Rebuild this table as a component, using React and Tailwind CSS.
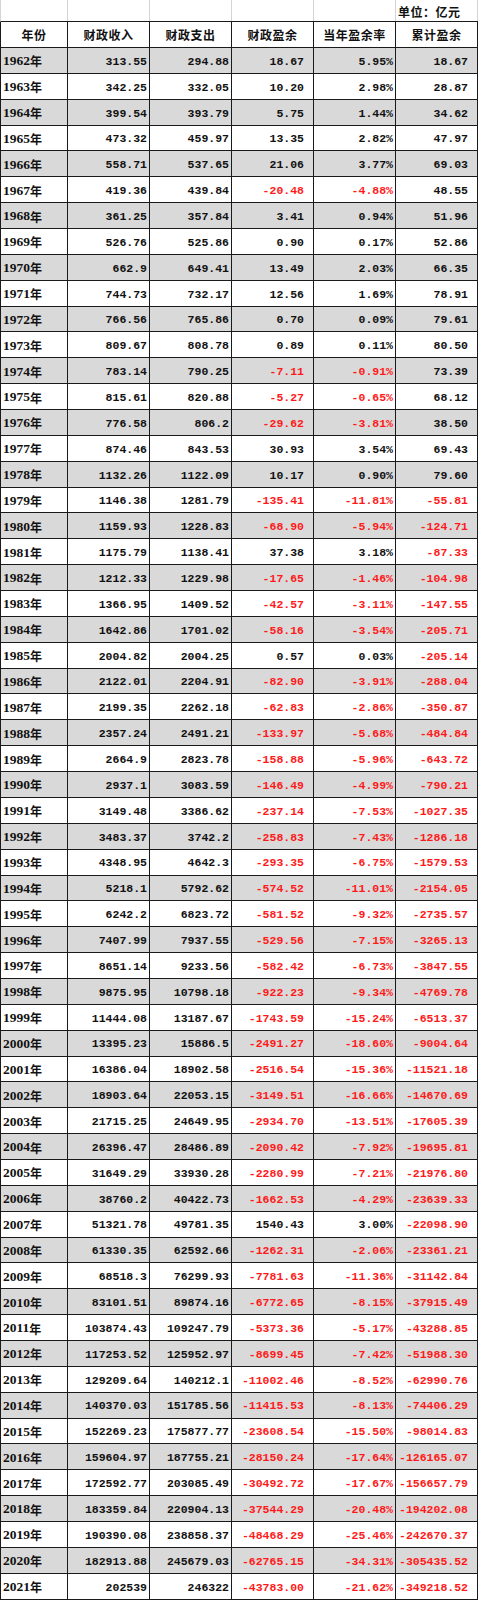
import React from "react";

const rows = [
  ["1962", "313.55", "294.88", "18.67", "5.95%", "18.67"],
  ["1963", "342.25", "332.05", "10.20", "2.98%", "28.87"],
  ["1964", "399.54", "393.79", "5.75", "1.44%", "34.62"],
  ["1965", "473.32", "459.97", "13.35", "2.82%", "47.97"],
  ["1966", "558.71", "537.65", "21.06", "3.77%", "69.03"],
  ["1967", "419.36", "439.84", "-20.48", "-4.88%", "48.55"],
  ["1968", "361.25", "357.84", "3.41", "0.94%", "51.96"],
  ["1969", "526.76", "525.86", "0.90", "0.17%", "52.86"],
  ["1970", "662.9", "649.41", "13.49", "2.03%", "66.35"],
  ["1971", "744.73", "732.17", "12.56", "1.69%", "78.91"],
  ["1972", "766.56", "765.86", "0.70", "0.09%", "79.61"],
  ["1973", "809.67", "808.78", "0.89", "0.11%", "80.50"],
  ["1974", "783.14", "790.25", "-7.11", "-0.91%", "73.39"],
  ["1975", "815.61", "820.88", "-5.27", "-0.65%", "68.12"],
  ["1976", "776.58", "806.2", "-29.62", "-3.81%", "38.50"],
  ["1977", "874.46", "843.53", "30.93", "3.54%", "69.43"],
  ["1978", "1132.26", "1122.09", "10.17", "0.90%", "79.60"],
  ["1979", "1146.38", "1281.79", "-135.41", "-11.81%", "-55.81"],
  ["1980", "1159.93", "1228.83", "-68.90", "-5.94%", "-124.71"],
  ["1981", "1175.79", "1138.41", "37.38", "3.18%", "-87.33"],
  ["1982", "1212.33", "1229.98", "-17.65", "-1.46%", "-104.98"],
  ["1983", "1366.95", "1409.52", "-42.57", "-3.11%", "-147.55"],
  ["1984", "1642.86", "1701.02", "-58.16", "-3.54%", "-205.71"],
  ["1985", "2004.82", "2004.25", "0.57", "0.03%", "-205.14"],
  ["1986", "2122.01", "2204.91", "-82.90", "-3.91%", "-288.04"],
  ["1987", "2199.35", "2262.18", "-62.83", "-2.86%", "-350.87"],
  ["1988", "2357.24", "2491.21", "-133.97", "-5.68%", "-484.84"],
  ["1989", "2664.9", "2823.78", "-158.88", "-5.96%", "-643.72"],
  ["1990", "2937.1", "3083.59", "-146.49", "-4.99%", "-790.21"],
  ["1991", "3149.48", "3386.62", "-237.14", "-7.53%", "-1027.35"],
  ["1992", "3483.37", "3742.2", "-258.83", "-7.43%", "-1286.18"],
  ["1993", "4348.95", "4642.3", "-293.35", "-6.75%", "-1579.53"],
  ["1994", "5218.1", "5792.62", "-574.52", "-11.01%", "-2154.05"],
  ["1995", "6242.2", "6823.72", "-581.52", "-9.32%", "-2735.57"],
  ["1996", "7407.99", "7937.55", "-529.56", "-7.15%", "-3265.13"],
  ["1997", "8651.14", "9233.56", "-582.42", "-6.73%", "-3847.55"],
  ["1998", "9875.95", "10798.18", "-922.23", "-9.34%", "-4769.78"],
  ["1999", "11444.08", "13187.67", "-1743.59", "-15.24%", "-6513.37"],
  ["2000", "13395.23", "15886.5", "-2491.27", "-18.60%", "-9004.64"],
  ["2001", "16386.04", "18902.58", "-2516.54", "-15.36%", "-11521.18"],
  ["2002", "18903.64", "22053.15", "-3149.51", "-16.66%", "-14670.69"],
  ["2003", "21715.25", "24649.95", "-2934.70", "-13.51%", "-17605.39"],
  ["2004", "26396.47", "28486.89", "-2090.42", "-7.92%", "-19695.81"],
  ["2005", "31649.29", "33930.28", "-2280.99", "-7.21%", "-21976.80"],
  ["2006", "38760.2", "40422.73", "-1662.53", "-4.29%", "-23639.33"],
  ["2007", "51321.78", "49781.35", "1540.43", "3.00%", "-22098.90"],
  ["2008", "61330.35", "62592.66", "-1262.31", "-2.06%", "-23361.21"],
  ["2009", "68518.3", "76299.93", "-7781.63", "-11.36%", "-31142.84"],
  ["2010", "83101.51", "89874.16", "-6772.65", "-8.15%", "-37915.49"],
  ["2011", "103874.43", "109247.79", "-5373.36", "-5.17%", "-43288.85"],
  ["2012", "117253.52", "125952.97", "-8699.45", "-7.42%", "-51988.30"],
  ["2013", "129209.64", "140212.1", "-11002.46", "-8.52%", "-62990.76"],
  ["2014", "140370.03", "151785.56", "-11415.53", "-8.13%", "-74406.29"],
  ["2015", "152269.23", "175877.77", "-23608.54", "-15.50%", "-98014.83"],
  ["2016", "159604.97", "187755.21", "-28150.24", "-17.64%", "-126165.07"],
  ["2017", "172592.77", "203085.49", "-30492.72", "-17.67%", "-156657.79"],
  ["2018", "183359.84", "220904.13", "-37544.29", "-20.48%", "-194202.08"],
  ["2019", "190390.08", "238858.37", "-48468.29", "-25.46%", "-242670.37"],
  ["2020", "182913.88", "245679.03", "-62765.15", "-34.31%", "-305435.52"],
  ["2021", "202539", "246322", "-43783.00", "-21.62%", "-349218.52"],
];

const headers = ["年份", "财政收入", "财政支出", "财政盈余", "当年盈余率", "累计盈余"];

// padding on the right of each number column
const numPad = ["pr-[2px]", "pr-[2px]", "pr-[9px]", "pr-[2px]", "pr-[9px]"];

const grid = "grid grid-cols-[67px_82px_82px_82px_82px_82px]";

const NumCell = ({ value, pad, colored }) => {
  const neg = colored && value.startsWith("-");
  return (
    <div
      className={`flex items-center justify-end border-r border-[#1a1a1a] pt-[2px] ${pad} ${
        neg ? "text-[#ff1a1a]" : "text-[#111]"
      }`}
    >
      {value}
    </div>
  );
};

export default function App() {
  return (
    <div className="w-[478px] bg-white font-['Liberation_Mono',monospace] text-[11.5px] font-bold">
      {/* top row with unit label */}
      <div className={`${grid} h-[22px] border-b border-[#1a1a1a] border-l border-l-[#d4d4d4]`}>
        <div className="border-r border-[#d4d4d4]" />
        <div className="border-r border-[#d4d4d4]" />
        <div className="border-r border-[#d4d4d4]" />
        <div className="border-r border-[#d4d4d4]" />
        <div className="border-r border-[#d4d4d4]" />
        <div className="flex items-center border-r border-[#d4d4d4] pl-[2px] pt-[2px] font-['Noto_Sans_CJK_SC',sans-serif] text-[12px] tracking-[0.5px] text-[#111]">
          单位：亿元
        </div>
      </div>

      {/* header */}
      <div className={`${grid} h-[26px] border-b border-l border-[#1a1a1a] bg-white`}>
        {headers.map((h) => (
          <div
            key={h}
            className="flex items-center justify-center border-r border-[#1a1a1a] font-['Noto_Sans_CJK_SC',sans-serif] text-[12px] tracking-[0.5px] text-[#111]"
          >
            {h}
          </div>
        ))}
      </div>

      {/* data */}
      {rows.map((r, i) => (
        <div
          key={r[0]}
          className={`${grid} h-[25.87px] border-b border-l border-[#1a1a1a] ${
            i % 2 === 0 ? "bg-[#d9d9d9]" : "bg-white"
          }`}
        >
          <div className="flex items-center border-r border-[#1a1a1a] pl-[2px] pt-[2px] font-['Liberation_Serif','Noto_Sans_CJK_SC',serif] text-[13.5px] text-[#111]">
            {r[0]}
            <span className="font-['Noto_Sans_CJK_SC',sans-serif] text-[12px]">年</span>
          </div>
          {r.slice(1).map((v, j) => (
            <NumCell key={j} value={v} pad={numPad[j]} colored={j >= 2} />
          ))}
        </div>
      ))}
    </div>
  );
}
